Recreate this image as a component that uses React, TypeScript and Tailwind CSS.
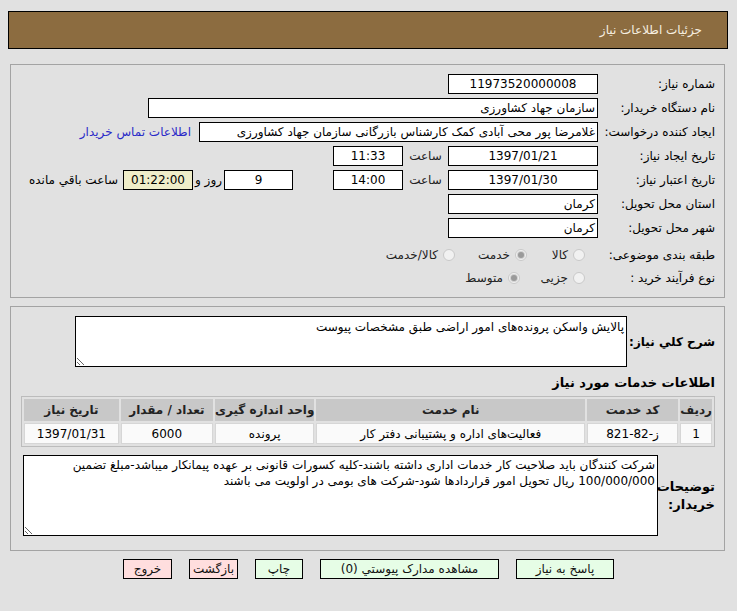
import React from "react";

function Field({ w, children, align = "center", bg = "bg-white" }: { w: string; children?: React.ReactNode; align?: "center" | "right"; bg?: string }) {
  return (
    <div
      className={`${w} ${bg} h-[20px] border border-black flex items-center px-[2px] whitespace-nowrap overflow-hidden ${
        align === "center" ? "justify-center" : "justify-start"
      }`}
    >
      {children}
    </div>
  );
}

function Row({ label, children }: { label: string; children?: React.ReactNode }) {
  return (
    <div className="h-[24px] flex items-center">
      <div className="w-[117px] shrink-0 text-right whitespace-nowrap">{label}</div>
      {children}
    </div>
  );
}

function Radio({ checked }: { checked?: boolean }) {
  return (
    <span className="w-[12px] h-[12px] shrink-0 rounded-full border border-[#c9c9c9] bg-[#f1f1f1] flex items-center justify-center">
      {checked && <span className="w-[6px] h-[6px] rounded-full bg-[#9a9a9a] ring-1 ring-[#d0d0d0]" />}
    </span>
  );
}

function Option({ w, checked, text }: { w: string; checked?: boolean; text: string }) {
  return (
    <div className={`${w} shrink-0 flex items-center gap-[5px] text-[#222]`}>
      <Radio checked={checked} />
      <span>{text}</span>
    </div>
  );
}

function Btn({ w, bg, children }: { w: string; bg: string; children: React.ReactNode }) {
  return (
    <div className={`${w} ${bg} h-[20px] border border-black flex items-center justify-center text-[#111]`}>{children}</div>
  );
}

export default function App() {
  const cols = [
    { h: "ردیف", w: "w-[31px]", v: "1" },
    { h: "کد خدمت", w: "w-[93px]", v: "ز-82-821" },
    { h: "نام خدمت", w: "w-[273px]", v: "فعالیت‌های اداره و پشتیبانی دفتر کار" },
    { h: "واحد اندازه گیری", w: "w-[92px]", v: "پرونده" },
    { h: "تعداد / مقدار", w: "w-[93px]", v: "6000" },
    { h: "تاریخ نیاز", w: "w-[96px]", v: "1397/01/31" },
  ];

  return (
    <div dir="rtl" className="min-h-[611px] bg-[#e1e1e1] pt-[11px] pl-[8px] pr-[9px] font-['DejaVu_Sans',sans-serif] text-[12px] text-black">
      <div className="h-[38px] border border-black bg-[#8c6c40] flex items-center pr-[25px] text-[#f7efe0]">
        جزئیات اطلاعات نیاز
      </div>

      <div className="mt-[15px] ml-[2px] mr-[3px] h-[234px] border border-[#a3a3a3] pt-[7px] pr-[9px]">
        <Row label="شماره نیاز:">
          <Field w="w-[150px]">11973520000008</Field>
        </Row>
        <Row label="نام دستگاه خریدار:">
          <Field w="w-[450px]" align="right">سازمان جهاد کشاورزی</Field>
        </Row>
        <Row label="ایجاد کننده درخواست:">
          <Field w="w-[399px]" align="right">غلامرضا پور محی آبادی کمک کارشناس بازرگانی سازمان جهاد کشاورزی</Field>
          <span className="mr-[8px] text-[#2a2ac8] whitespace-nowrap">اطلاعات تماس خریدار</span>
        </Row>
        <Row label="تاریخ ایجاد نیاز:">
          <Field w="w-[150px]">1397/01/21</Field>
          <div className="w-[45px] text-center text-[#222]">ساعت</div>
          <Field w="w-[70px]">11:33</Field>
        </Row>
        <Row label="تاریخ اعتبار نیاز:">
          <Field w="w-[150px]">1397/01/30</Field>
          <div className="w-[45px] text-center text-[#222]">ساعت</div>
          <Field w="w-[70px]">14:00</Field>
          <div className="mr-[40px]">
            <Field w="w-[69px]">9</Field>
          </div>
          <div className="w-[31px] text-center whitespace-nowrap">روز و</div>
          <Field w="w-[70px]" bg="bg-[#efedc9]">01:22:00</Field>
          <span className="mr-[5px] whitespace-nowrap">ساعت باقي مانده</span>
        </Row>
        <Row label="استان محل تحویل:">
          <Field w="w-[150px]" align="right">کرمان</Field>
        </Row>
        <Row label="شهر محل تحویل:">
          <Field w="w-[150px]" align="right">کرمان</Field>
        </Row>
        <div className="mt-[3px] h-[23px] flex items-center">
          <div className="w-[117px] shrink-0 text-right">طبقه بندی موضوعی:</div>
          <div className="flex items-center pr-[13px]">
            <Option w="w-[58px]" text="کالا" />
            <Option w="w-[72px]" checked text="خدمت" />
            <Option w="w-[90px]" text="کالا/خدمت" />
          </div>
        </div>
        <div className="h-[23px] flex items-center">
          <div className="w-[117px] shrink-0 text-right">نوع فرآیند خرید :</div>
          <div className="flex items-center pr-[13px]">
            <Option w="w-[65px]" text="جزیی" />
            <Option w="w-[80px]" checked text="متوسط" />
          </div>
        </div>
      </div>

      <div className="mt-[8px] ml-[2px] mr-[3px] h-[245px] border border-[#a3a3a3] pt-[9px] pr-[9px]">
        <div className="flex items-center">
          <div className="w-[88px] shrink-0 text-right font-bold text-[12px] whitespace-nowrap">شرح کلي نیاز:</div>
          <textarea
            readOnly
            dir="rtl"
            className="w-[552px] h-[51px] border border-black bg-white px-[2px] py-[2px] text-[12px] leading-[16px] outline-none"
            value="پالایش واسکن پرونده‌های امور اراضی طبق مشخصات پیوست"
          />
        </div>
        <div className="h-[29px] flex items-center pt-[3px] font-bold text-[13px]">اطلاعات خدمات مورد نیاز</div>
        <table className="w-[694px] border border-[#bcbcbc] border-separate border-spacing-[2px] text-[12px]">
          <thead>
            <tr>
              {cols.map((c, i) => (
                <th key={i} className={`${c.w} h-[22px] bg-[#c8c8c8] font-bold text-center text-[#222] whitespace-nowrap`}>
                  {c.h}
                </th>
              ))}
            </tr>
          </thead>
          <tbody>
            <tr>
              {cols.map((c, i) => (
                <td key={i} className={`${c.w} h-[21px] bg-[#fafafa] border border-[#d6d6d6] text-center whitespace-nowrap`}>
                  {c.v}
                </td>
              ))}
            </tr>
          </tbody>
        </table>
        <div className="mt-[8px] flex items-center">
          <div className="w-[57px] shrink-0 text-right font-bold text-[13px] leading-[18px]">
            توضیحات
            <br />
            خریدار:
          </div>
          <textarea
            readOnly
            dir="rtl"
            className="w-[635px] h-[81px] border border-black bg-white px-[2px] py-[1px] text-[12px] leading-[16px] outline-none"
            value={"شرکت کنندگان باید صلاحیت کار خدمات اداری داشته باشند-کلیه کسورات قانونی بر عهده پیمانکار میباشد-مبلغ تضمین\n100/000/000 ریال تحویل امور قراردادها شود-شرکت های بومی در اولویت می باشند"}
          />
        </div>
      </div>

      <div className="mt-[8px] flex justify-center gap-[17px] pl-[1px]">
        <Btn w="w-[98px]" bg="bg-[#e6fde6]">پاسخ به نیاز</Btn>
        <Btn w="w-[179px]" bg="bg-[#e6fde6]">مشاهده مدارک پیوستي (0)</Btn>
        <Btn w="w-[48px]" bg="bg-[#e6fde6]">چاپ</Btn>
        <Btn w="w-[49px]" bg="bg-[#ffdede]">بازگشت</Btn>
        <Btn w="w-[49px]" bg="bg-[#ffdede]">خروج</Btn>
      </div>
    </div>
  );
}
